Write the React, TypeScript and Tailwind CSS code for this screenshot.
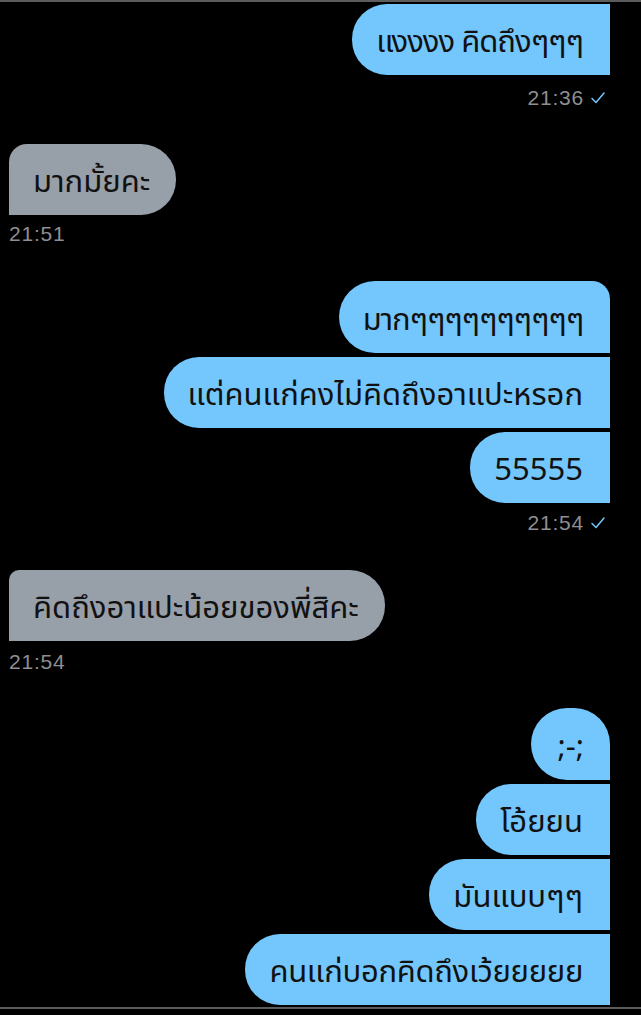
const thai = { fontFamily: '"Noto Sans Thai", "Noto Sans", "DejaVu Sans", sans-serif' };

type Msg = { text: string; cls: string };

function Out({ text, cls }: Msg) {
  return (
    <div className="flex justify-end pr-[31px]">
      <div
        className={`flex h-[71px] items-center bg-[#74c7fd] pt-2 pl-6 pr-[27px] text-[31px] text-[#111] ${cls}`}
        style={thai}
      >
        {text}
      </div>
    </div>
  );
}

function In({ text, cls }: Msg) {
  return (
    <div className="flex justify-start pl-[9px]">
      <div
        className={`flex h-[71px] items-center bg-[#979fa9] pt-2 pl-6 pr-[26px] text-[31px] text-[#111] ${cls}`}
        style={thai}
      >
        {text}
      </div>
    </div>
  );
}

function Time({ t, out, cls }: { t: string; out?: boolean; cls: string }) {
  return (
    <div
      className={`flex h-5 items-center text-[21px] tracking-[0.8px] text-[#8e8e93] ${out ? 'justify-end pr-[35px]' : 'pl-[9px]'} ${cls}`}
      style={{ fontFamily: '"Liberation Sans", Arial, sans-serif' }}
    >
      <span>{t}</span>
      {out && (
        <svg width="16" height="14" viewBox="0 0 16 14" className="ml-[6px]">
          <path d="M2 7.5 L6 11.5 L14 2" fill="none" stroke="#74c7fd" strokeWidth="1.5" strokeLinecap="round" strokeLinejoin="round" />
        </svg>
      )}
    </div>
  );
}

export default function App() {
  return (
    <div className="flex h-[1015px] w-[641px] flex-col overflow-hidden border-t-2 border-[#5c5c5c] bg-black">
      <div className="mt-[2px]">
        <Out text="แงงงง คิดถึงๆๆๆ" cls="rounded-l-[35px] h-[70px] tracking-[-1px]" />
      </div>
      <Time t="21:36" out cls="mt-[13px]" />

      <div className="mt-[36px]">
        <In text="มากมั้ยคะ" cls="rounded-tl-[18px] rounded-r-[35px]" />
      </div>
      <Time t="21:51" cls="mt-[9px]" />

      <div className="mt-[37px] flex flex-col gap-[4px]">
        <Out text="มากๆๆๆๆๆๆๆๆๆๆ" cls="rounded-l-[36px] rounded-tr-[18px] h-[72px] tracking-[-1.1px]" />
        <Out text="แต่คนแก่คงไม่คิดถึงอาแปะหรอก" cls="rounded-l-[35px]" />
        <Out text="55555" cls="rounded-l-[35px]" />
      </div>
      <Time t="21:54" out cls="mt-[10px]" />

      <div className="mt-[37px]">
        <In text="คิดถึงอาแปะน้อยของพี่สิคะ" cls="rounded-tl-[10px] rounded-r-[35px]" />
      </div>
      <Time t="21:54" cls="mt-[11px]" />

      <div className="mt-[36px] flex flex-col gap-[4px]">
        <Out text=";-;" cls="rounded-l-[36px] rounded-tr-[36px] h-[72px] !pl-[26px] !pr-[26px]" />
        <Out text="โอ้ยยน" cls="rounded-l-[35px]" />
        <Out text="มันแบบๆๆ" cls="rounded-l-[35px]" />
        <Out text="คนแก่บอกคิดถึงเว้ยยยยย" cls="rounded-l-[35px] tracking-[-0.3px]" />
      </div>
      <div className="mt-[2px] h-[2px] w-full bg-[#5c5c5c]" />
    </div>
  );
}
